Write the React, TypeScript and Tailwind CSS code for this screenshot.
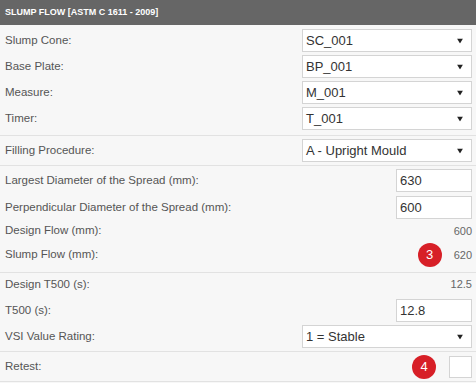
import React from "react";

const Arrow = () => (
  <svg width="6" height="5" viewBox="0 0 6 5" className="absolute right-[8px] top-1/2 -translate-y-1/2">
    <path d="M0 0 L6 0 L3 5 Z" fill="#222" />
  </svg>
);

const Select = ({ value, w = "w-[170px]" }: { value: string; w?: string }) => (
  <div className={`relative ${w} h-[23px] bg-white border border-[#d4d4d4] flex items-center pl-[3px] text-[13px] text-[#333]`}>
    {value}
    <Arrow />
  </div>
);

const Input = ({ value }: { value: string }) => (
  <div className="w-[76px] h-[23px] bg-white border border-[#d4d4d4] flex items-center pl-[3px] text-[13px] text-[#333]">
    {value}
  </div>
);

const Badge = ({ n }: { n: string }) => (
  <div className="w-[24px] h-[24px] rounded-full bg-[#d71f27] text-white text-[13px] flex items-center justify-center">
    {n}
  </div>
);

const Label = ({ children }: { children: React.ReactNode }) => (
  <span className="text-[11.5px] text-[#555]">{children}</span>
);

export default function App() {
  return (
    <div
      className="w-[476px] h-[383px] bg-[#f7f7f7] overflow-hidden"
      style={{ fontFamily: '"Liberation Sans", Arial, sans-serif' }}
    >
      <div className="h-[25px] bg-[#666666] text-white font-bold text-[9px] px-[5px] flex items-center">
        SLUMP FLOW [ASTM C 1611 - 2009]
      </div>

      <div className="pt-[4px] pb-[5px] pl-[5px] pr-[4px] flex flex-col gap-[3px] border-b border-[#e2e2e2]">
        {[
          ["Slump Cone:", "SC_001"],
          ["Base Plate:", "BP_001"],
          ["Measure:", "M_001"],
          ["Timer:", "T_001"],
        ].map(([l, v]) => (
          <div key={l} className="flex items-center justify-between">
            <Label>{l}</Label>
            <Select value={v} />
          </div>
        ))}
      </div>

      <div className="pt-[3px] pb-[3px] pl-[5px] pr-[4px] flex items-center justify-between border-b border-[#e2e2e2]">
        <Label>Filling Procedure:</Label>
        <Select value="A - Upright Mould" />
      </div>

      <div className="pt-[3px] pb-[5px] pl-[5px] pr-[4px] flex flex-col border-b border-[#e2e2e2]">
        <div className="flex items-center justify-between h-[23px]">
          <Label>Largest Diameter of the Spread (mm):</Label>
          <Input value="630" />
        </div>
        <div className="flex items-center justify-between h-[23px] mt-[4px]">
          <Label>Perpendicular Diameter of the Spread (mm):</Label>
          <Input value="600" />
        </div>
        <div className="flex items-center justify-between h-[24px]">
          <Label>Design Flow (mm):</Label>
          <span className="text-[11px] text-[#666]">600</span>
        </div>
        <div className="flex items-center justify-between h-[24px]">
          <Label>Slump Flow (mm):</Label>
          <div className="flex items-center gap-[12px]">
            <Badge n="3" />
            <span className="text-[11px] text-[#666]">620</span>
          </div>
        </div>
      </div>

      <div className="pb-[3px] pl-[5px] pr-[4px] flex flex-col border-b border-[#e2e2e2]">
        <div className="flex items-center justify-between h-[23px]">
          <Label>Design T500 (s):</Label>
          <span className="text-[11px] text-[#666]">12.5</span>
        </div>
        <div className="flex items-center justify-between h-[23px] mt-[3px]">
          <Label>T500 (s):</Label>
          <Input value="12.8" />
        </div>
        <div className="flex items-center justify-between mt-[3px]">
          <Label>VSI Value Rating:</Label>
          <Select value="1 = Stable" />
        </div>
      </div>

      <div className="h-[30px] pl-[5px] pr-[4px] flex items-center justify-between border-b border-[#e2e2e2]">
        <Label>Retest:</Label>
        <div className="flex items-center gap-[13px]">
          <Badge n="4" />
          <div className="w-[23px] h-[22px] bg-white border border-[#d4d4d4]" />
        </div>
      </div>
    </div>
  );
}
